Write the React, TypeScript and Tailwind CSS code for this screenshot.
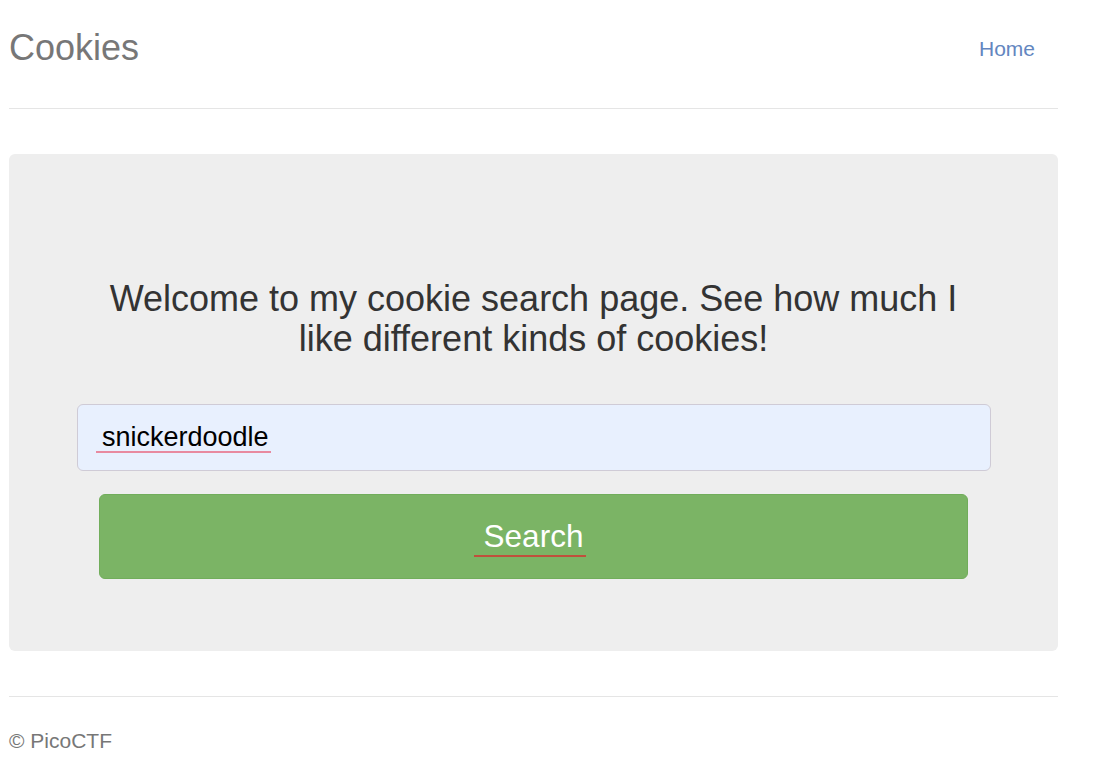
import React from 'react';

export default function App() {
  return (
    <div className="min-h-screen bg-white font-['Liberation_Sans',Arial,sans-serif]">
      <div className="w-[1049px] ml-[9px]">
        {/* Header */}
        <div className="flex items-start justify-between border-b border-[#e5e5e5] h-[109px]">
          <h3 className="mt-[28px] text-[36px] leading-[40px] text-[#777]">Cookies</h3>
          <nav className="mt-[37px] mr-[23px]">
            <a href="#" className="text-[21px] leading-[24px] text-[#6386c0]">Home</a>
          </nav>
        </div>

        {/* Jumbotron */}
        <div className="mt-[45px] rounded-[6px] bg-[#eee] px-[90px] pt-[125px] pb-[72px]">
          <h3 className="text-center text-[36px] leading-[40px] text-[#333]">
            Welcome to my cookie search page. See how much I like different kinds of cookies!
          </h3>
          <form className="mt-[45px]" onSubmit={(e) => e.preventDefault()}>
            <div className="relative ml-[-22px] mr-[-23px]">
              <input
                type="text"
                defaultValue="snickerdoodle"
                spellCheck={false}
                className="block h-[67px] w-full rounded-[6px] border border-[#cfcbd6] bg-[#e8f0fe] pl-[24px] text-[27px] text-black outline-none font-['Liberation_Sans',Arial,sans-serif]"
              />
              <span className="pointer-events-none absolute left-[19px] top-[47px] h-[2px] w-[175px] bg-[#e88aa0]" />
            </div>
            <button
              type="submit"
              className="relative mt-[23px] flex h-[85px] w-full items-center justify-center rounded-[6px] border border-[#71ad5b] bg-[#7bb465] text-[31.5px] text-white"
            >
              <span className="relative">
                Search
                <span className="pointer-events-none absolute left-[-10px] right-[-3px] top-[42px] h-[2px] bg-[#c0503c]" />
              </span>
            </button>
          </form>
        </div>

        {/* Footer */}
        <footer className="mt-[45px] border-t border-[#e5e5e5] pt-[32px]">
          <p className="text-[21px] leading-[24px] text-[#777]">© PicoCTF</p>
        </footer>
      </div>
    </div>
  );
}
